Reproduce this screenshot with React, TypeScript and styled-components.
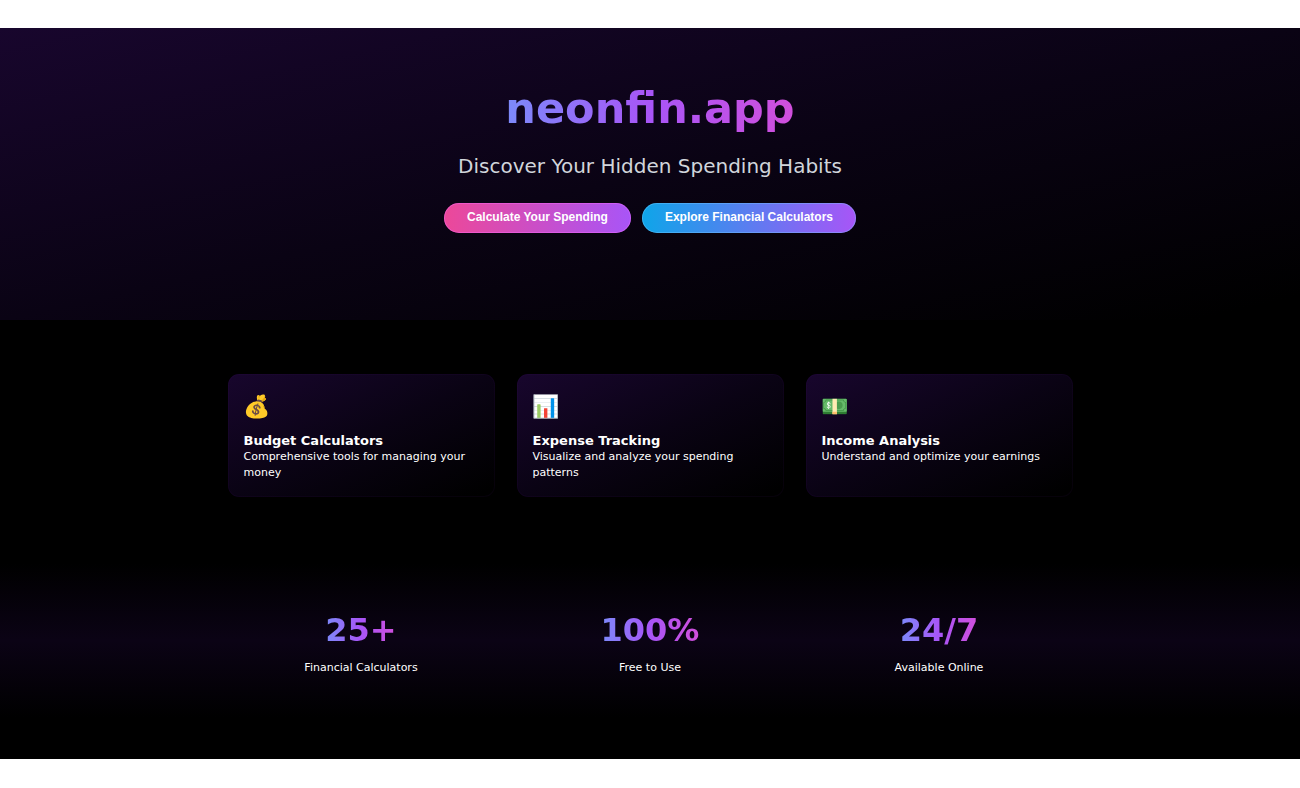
import React from "react";
import styled, { createGlobalStyle } from "styled-components";

const GlobalStyle = createGlobalStyle`
  *, *::before, *::after { box-sizing: border-box; }
  body {
    margin: 0;
    background: #fff;
    font-family: "DejaVu Sans", sans-serif;
  }
  h1, h2, p { margin: 0; }
`;

const neonText = `
  background: linear-gradient(to right, #7c8afa 0%, #a855f7 50%, #d14fdc 100%);
  -webkit-background-clip: text;
  background-clip: text;
  color: transparent;
`;

const panelGradient = `
  background: linear-gradient(to bottom right, #18062d 0%, #0a0314 50%, #000 96%);
`;

const Page = styled.main`
  margin: 28px 0;
  background: #000;
  color: #fff;
`;

const Hero = styled.header`
  ${panelGradient}
  display: flex;
  flex-direction: column;
  align-items: center;
  padding: 54px 24px 87px;
  text-align: center;
`;

const Title = styled.h1`
  ${neonText}
  font-size: 43px;
  line-height: 52px;
  font-weight: 700;
`;

const Tagline = styled.p`
  margin-top: 16px;
  color: #d1d5db;
  font-size: 20px;
  line-height: 32px;
`;

const Actions = styled.div`
  display: flex;
  flex-wrap: wrap;
  justify-content: center;
  gap: 11px;
  margin-top: 21px;
`;

const PillButton = styled.button<{ $from: string; $edge: string }>`
  height: 30px;
  padding: 0 23px 2px;
  border: 0;
  border-radius: 15px;
  background: linear-gradient(to right, ${(p) => p.$from}, #a855f7);
  box-shadow: inset 0 0 0 1px ${(p) => p.$edge};
  color: #fff;
  font: 700 12px/16px "Liberation Sans", sans-serif;
  cursor: pointer;
`;

const Container = styled.div`
  display: grid;
  grid-template-columns: repeat(3, 1fr);
  gap: 22px;
  width: 100%;
  max-width: 845px;
  margin: 0 auto;
`;

const Features = styled.section`
  padding: 54px 24px;
`;

const Card = styled.article`
  ${panelGradient}
  padding: 17px 16px 16px;
  border-radius: 11px;
  box-shadow: inset 0 0 0 1px rgba(88, 28, 135, 0.08);
`;

const CardIcon = styled.div`
  font-family: "Noto Color Emoji", sans-serif;
  font-size: 22px;
  line-height: 32px;
`;

const CardTitle = styled.h2`
  margin-top: 10px;
  font-size: 13px;
  line-height: 16px;
  font-weight: 700;
`;

const CardText = styled.p`
  font-size: 11px;
  line-height: 16px;
`;

const Stats = styled.section`
  padding: 59px 24px 83px;
  background: linear-gradient(to bottom, #000 6%, #0b0315 43%, #000 80%);
`;

const Stat = styled.div`
  display: flex;
  flex-direction: column;
  align-items: center;
  gap: 10px;
`;

const StatValue = styled.p`
  ${neonText}
  font-size: 32px;
  line-height: 40px;
  font-weight: 700;
`;

const StatLabel = styled.p`
  font-size: 11px;
  line-height: 16px;
`;

const features = [
  { icon: "💰", title: "Budget Calculators", text: "Comprehensive tools for managing your money" },
  { icon: "📊", title: "Expense Tracking", text: "Visualize and analyze your spending patterns" },
  { icon: "💵", title: "Income Analysis", text: "Understand and optimize your earnings" },
];

const stats = [
  { value: "25+", label: "Financial Calculators" },
  { value: "100%", label: "Free to Use" },
  { value: "24/7", label: "Available Online" },
];

export default function App() {
  return (
    <>
      <GlobalStyle />
      <Page>
        <Hero>
          <Title>neonfin.app</Title>
          <Tagline>Discover Your Hidden Spending Habits</Tagline>
          <Actions>
            <PillButton type="button" $from="#ec4899" $edge="rgba(255, 110, 255, 0.4)">
              Calculate Your Spending
            </PillButton>
            <PillButton type="button" $from="#0ea5e9" $edge="rgba(120, 200, 255, 0.4)">
              Explore Financial Calculators
            </PillButton>
          </Actions>
        </Hero>
        <Features>
          <Container>
            {features.map((f) => (
              <Card key={f.title}>
                <CardIcon aria-hidden="true">{f.icon}</CardIcon>
                <CardTitle>{f.title}</CardTitle>
                <CardText>{f.text}</CardText>
              </Card>
            ))}
          </Container>
        </Features>
        <Stats>
          <Container>
            {stats.map((s) => (
              <Stat key={s.label}>
                <StatValue>{s.value}</StatValue>
                <StatLabel>{s.label}</StatLabel>
              </Stat>
            ))}
          </Container>
        </Stats>
      </Page>
    </>
  );
}
